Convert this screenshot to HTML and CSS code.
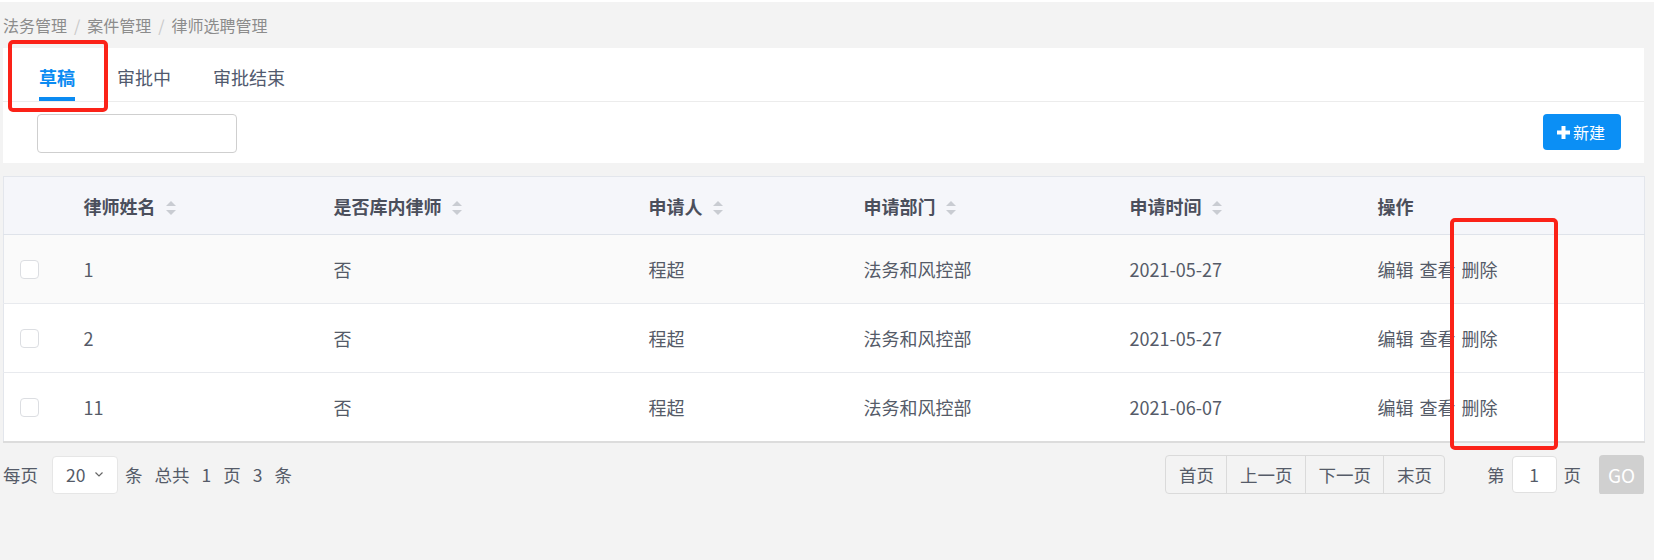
FILE: index.html
```html
<!DOCTYPE html>
<html lang="zh-CN">
<head>
  <meta charset="UTF-8">
  <meta name="viewport" content="width=device-width, initial-scale=1.0">
  <title>律师选聘管理</title>
  <link rel="stylesheet" href="styles.css">
</head>
<body>
  <div class="page">
    <div class="breadcrumb">
      <span>法务管理</span><span class="sep">/</span><span>案件管理</span><span class="sep">/</span><span>律师选聘管理</span>
    </div>

    <div class="panel">
      <div class="tabs">
        <div class="tab active">草稿</div>
        <div class="tab">审批中</div>
        <div class="tab">审批结束</div>
      </div>
      <div class="toolbar">
        <input class="search" type="text">
        <button class="btn-new">
          <svg width="13" height="13" viewBox="0 0 13 13"><rect x="4.5" y="0" width="4" height="13" fill="#fff"/><rect x="0" y="4.5" width="13" height="4" fill="#fff"/></svg>
          <span>新建</span>
        </button>
      </div>
    </div>

    <table class="grid">
      <colgroup>
        <col style="width:80px"><col style="width:250px"><col style="width:315px"><col style="width:215px"><col style="width:266px"><col style="width:248px"><col style="width:267px">
      </colgroup>
      <thead>
        <tr>
          <th></th>
          <th>律师姓名 <i class="sort"></i></th>
          <th>是否库内律师 <i class="sort"></i></th>
          <th>申请人 <i class="sort"></i></th>
          <th>申请部门 <i class="sort"></i></th>
          <th>申请时间 <i class="sort"></i></th>
          <th>操作</th>
        </tr>
      </thead>
      <tbody>
        <tr class="hover">
          <td class="check"><span class="box"></span></td>
          <td>1</td><td>否</td><td>程超</td><td>法务和风控部</td><td>2021-05-27</td>
          <td class="ops"><span>编辑</span><span>查看</span><span>删除</span></td>
        </tr>
        <tr>
          <td class="check"><span class="box"></span></td>
          <td>2</td><td>否</td><td>程超</td><td>法务和风控部</td><td>2021-05-27</td>
          <td class="ops"><span>编辑</span><span>查看</span><span>删除</span></td>
        </tr>
        <tr>
          <td class="check"><span class="box"></span></td>
          <td>11</td><td>否</td><td>程超</td><td>法务和风控部</td><td>2021-06-07</td>
          <td class="ops"><span>编辑</span><span>查看</span><span>删除</span></td>
        </tr>
      </tbody>
    </table>

    <div class="pager">
      <div class="pager-left">
        <span>每页</span>
        <div class="size-select">
          <span>20</span>
          <svg width="8" height="5" viewBox="0 0 8 5"><polyline points="0.5,0.5 4,4 7.5,0.5" fill="none" stroke="#666" stroke-width="1.2"/></svg>
        </div>
        <span>条</span><span>总共</span><span>1</span><span>页</span><span>3</span><span>条</span>
      </div>
      <div class="pager-right">
        <div class="page-btns">
          <span>首页</span><span>上一页</span><span>下一页</span><span>末页</span>
        </div>
        <div class="jump">
          <span>第</span>
          <div class="page-input">1</div>
          <span>页</span>
          <div class="btn-go">GO</div>
        </div>
      </div>
    </div>
  </div>

  <div class="mark mark-tab"></div>
  <div class="mark mark-del"></div>
</body>
</html>
```

FILE: styles.css
```css
body {
  margin: 0;
  background-color: #f3f3f3;
  border-top: 2px solid #fff;
  font-family: "Noto Sans CJK SC", "Noto Sans", sans-serif;
  color: #515a6e;
}
.page {
  padding: 0 10px 0 3px;
}
.breadcrumb {
  height: 46px;
  display: flex;
  align-items: center;
  font-size: 16px;
  color: #8c8c8c;
}
.breadcrumb .sep {
  margin: 0 7px;
  color: #c8c8c8;
}
.panel {
  background-color: #fff;
}
.tabs {
  display: flex;
  height: 53px;
  padding-left: 36px;
  gap: 42px;
  border-bottom: 1px solid #ececec;
}
.tab {
  box-sizing: border-box;
  height: 53px;
  padding-top: 8px;
  display: flex;
  align-items: center;
  font-size: 18px;
  color: #515a6e;
  border-bottom: 4px solid transparent;
}
.tab.active {
  color: #0b8bf2;
  font-weight: bold;
  border-bottom-color: #0b8bf2;
}
.toolbar {
  height: 61px;
  box-sizing: border-box;
  padding: 12px 23px 0 34px;
  display: flex;
  justify-content: space-between;
  align-items: flex-start;
}
.search {
  width: 200px;
  height: 39px;
  box-sizing: border-box;
  border: 1px solid #cfcfcf;
  border-radius: 4px;
  outline: none;
}
.btn-new {
  width: 78px;
  height: 36px;
  border: none;
  border-radius: 4px;
  background-color: #0b8ff5;
  color: #fff;
  font-family: inherit;
  font-size: 16px;
  display: flex;
  align-items: center;
  padding: 0 0 0 14px;
  gap: 3px;
}
.grid {
  margin-top: 13px;
  width: 1641px;
  table-layout: fixed;
  border-collapse: collapse;
  background-color: #fff;
  border: 1px solid #e3e6ec;
  border-bottom: 2px solid #dcdcdc;
  font-size: 18px;
}
.grid th {
  height: 57px;
  padding: 0;
  text-align: left;
  background-color: #f5f6fa;
  color: #4b4f5c;
  font-weight: bold;
  border-bottom: 1px solid #dfe3ea;
}
.grid td {
  height: 68px;
  padding: 0;
  border-bottom: 1px solid #e8eaee;
  color: #555b68;
}
.grid tr:last-child td {
  border-bottom: none;
}
.grid tr.hover td {
  background-color: #fafafa;
}
.sort {
  display: inline-block;
  width: 11px;
  height: 14px;
  margin-left: 6px;
  vertical-align: -1px;
  position: relative;
}
.sort::before,
.sort::after {
  content: "";
  position: absolute;
  left: 0;
  border-left: 5px solid transparent;
  border-right: 5px solid transparent;
}
.sort::before {
  top: 0;
  border-bottom: 5px solid #c9ccd2;
}
.sort::after {
  bottom: 0;
  border-top: 5px solid #c9ccd2;
}
.check {
  padding-left: 16px !important;
}
.box {
  display: block;
  width: 17px;
  height: 17px;
  border: 1px solid #dcdee2;
  border-radius: 4px;
  background-color: #fff;
}
.ops span {
  margin-right: 6px;
}
.pager {
  margin-top: 12px;
  display: flex;
  justify-content: space-between;
  align-items: flex-start;
  font-size: 17.5px;
  color: #555b68;
}
.pager-left {
  display: flex;
  align-items: center;
  height: 39px;
  gap: 12px;
}
.size-select {
  box-sizing: border-box;
  width: 66px;
  height: 38px;
  margin: 0 -5px 0 2px;
  background-color: #fff;
  border: 1px solid #e6e6e6;
  border-radius: 4px;
  display: flex;
  align-items: center;
  padding-left: 13px;
  gap: 10px;
}
.pager-right {
  display: flex;
  align-items: flex-start;
}
.page-btns {
  display: flex;
  height: 39px;
  box-sizing: border-box;
  border: 1px solid #dadada;
  border-radius: 4px;
}
.page-btns span {
  display: flex;
  align-items: center;
  padding: 0 12px 0 13px;
  border-left: 1px solid #dadada;
}
.page-btns span:first-child {
  border-left: none;
}
.jump {
  display: flex;
  align-items: center;
  height: 39px;
  margin-left: 42px;
}
.page-input {
  box-sizing: border-box;
  width: 45px;
  height: 37px;
  margin: 0 7px;
  background-color: #fff;
  border: 1px solid #e0e0e0;
  border-radius: 4px;
  display: flex;
  align-items: center;
  justify-content: center;
}
.btn-go {
  width: 45px;
  height: 40px;
  margin-left: 18px;
  background-color: #d0d0d0;
  color: #fff;
  border-radius: 4px;
  display: flex;
  align-items: center;
  justify-content: center;
  font-size: 19px;
}
.mark {
  position: absolute;
  border: 4px solid #fb2218;
  border-radius: 5px;
  box-sizing: border-box;
}
.mark-tab {
  left: 8px;
  top: 40px;
  width: 100px;
  height: 72px;
}
.mark-del {
  left: 1450px;
  top: 218px;
  width: 108px;
  height: 232px;
}
```
